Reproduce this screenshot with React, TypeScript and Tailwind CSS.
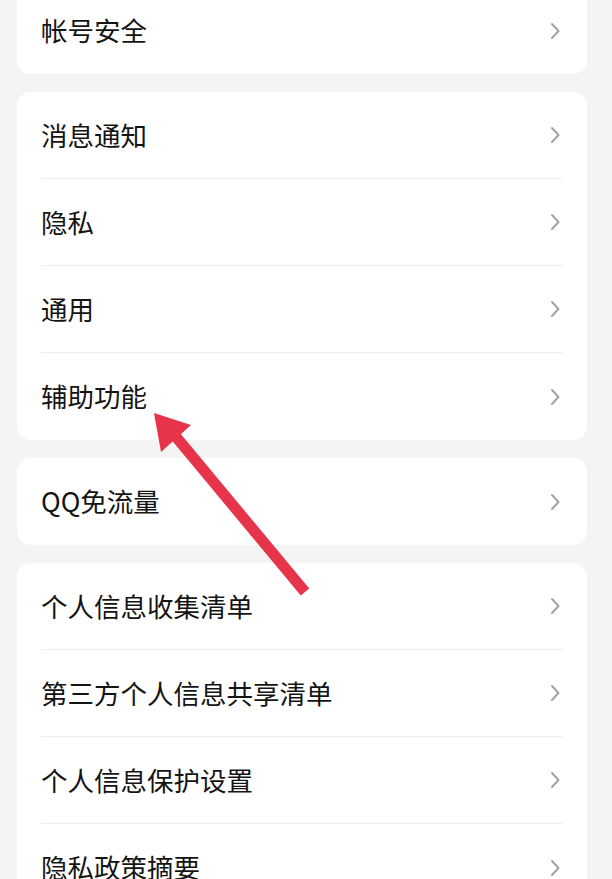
import React from "react";

const Chevron = () => (
  <svg width="12" height="18" viewBox="0 0 12 18" className="shrink-0">
    <path d="M3 2 L9.5 9 L3 16" fill="none" stroke="#a3a3a3" strokeWidth="2" strokeLinecap="round" strokeLinejoin="round" />
  </svg>
);

const Row = ({ label, last }: { label: string; last?: boolean }) => (
  <div className="flex flex-col px-6">
    <div className={`flex items-center justify-between pr-[2px] ${last ? "h-[87px]" : "h-[86px]"}`}>
      <span className="text-[26.5px] leading-none text-[#141414]">{label}</span>
      <Chevron />
    </div>
    {!last && <div className="h-px bg-[#eeeeee]" />}
  </div>
);

const Card = ({ items }: { items: string[] }) => (
  <div className="overflow-hidden rounded-[14px] bg-white">
    {items.map((t, i) => (
      <Row key={t} label={t} last={i === items.length - 1} />
    ))}
  </div>
);

export default function App() {
  return (
    <div
      className="relative h-[879px] w-[612px] overflow-hidden bg-[#f4f4f4]"
      style={{ fontFamily: '"Noto Sans CJK SC", "Noto Sans", sans-serif' }}
    >
      <div className="-mt-[13px] flex flex-col gap-[18px] px-[17px] pr-[25px]">
        <Card items={["帐号安全"]} />
        <Card items={["消息通知", "隐私", "通用", "辅助功能"]} />
        <Card items={["QQ免流量"]} />
        <Card items={["个人信息收集清单", "第三方个人信息共享清单", "个人信息保护设置", "隐私政策摘要"]} />
      </div>
      <svg className="pointer-events-none absolute left-0 top-0" width="612" height="879" viewBox="0 0 612 879">
        <line x1="305" y1="592" x2="172" y2="432" stroke="#e6354b" strokeWidth="11" strokeLinecap="butt" />
        <polygon points="154,413 191,425 161,452" fill="#e6354b" />
      </svg>
    </div>
  );
}
